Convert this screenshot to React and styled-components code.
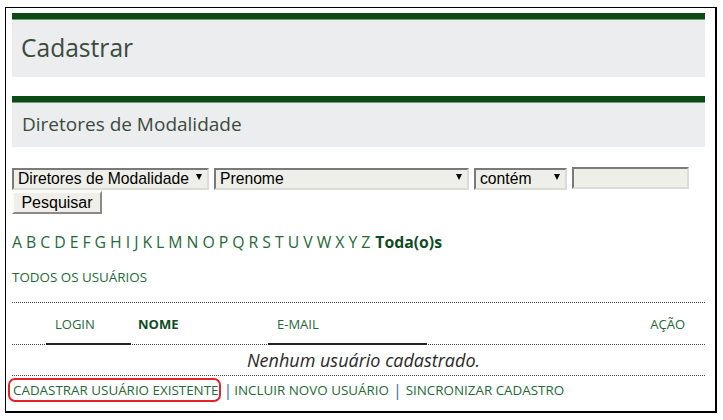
import React from "react";
import styled, { createGlobalStyle } from "styled-components";

const Global = createGlobalStyle`
  html, body { margin: 0; padding: 0; background: #fff; }
  body { font-family: "Open Sans", "Noto Sans", sans-serif; }
  * { box-sizing: border-box; }
`;

const Frame = styled.div`
  margin: 7px 6px 0 5px;
  width: 712px;
  height: 406px;
  border: 1px solid #000;
  border-right-width: 2px;
  border-bottom-width: 2px;
  padding: 5px 10px 0 6px;
`;

const Panel = styled.div`
  background: #ecedef;
  border-top: 6px solid #0b4a14;
  box-shadow: inset 0 1px 0 #6f9a74;
  height: ${(p) => p.$h}px;
  margin-bottom: ${(p) => p.$mb || 0}px;
  display: flex;
  align-items: center;
  padding-left: ${(p) => p.$pl}px;
`;

const Title = styled.h1`
  margin: 0;
  font-weight: 400;
  font-size: ${(p) => p.$size}px;
  color: #3b4b3d;
  line-height: 1;
`;

const FilterRow = styled.div`
  display: flex;
  gap: 5px;
  margin-top: 20px;
`;

const SelectWrap = styled.div`
  position: relative;
  width: ${(p) => p.$w}px;
  height: 22px;
`;

const Select = styled.select`
  appearance: none;
  width: 100%;
  height: 22px;
  background: #efefe9;
  border: 2px solid;
  border-color: #7a7a7a #dcdcd6 #dcdcd6 #7a7a7a;
  font-family: "Liberation Sans", Arial, sans-serif;
  font-size: 15.7px;
  color: #000;
  padding: 0 0 0 4px;
  border-radius: 0;
`;

const Arrow = styled.span`
  position: absolute;
  right: 7px;
  top: 7px;
  width: 0;
  height: 0;
  border-left: 3.5px solid transparent;
  border-right: 3.5px solid transparent;
  border-top: 6px solid #000;
  pointer-events: none;
`;

const TextInput = styled.input`
  width: 117px;
  height: 22px;
  background: #efefe9;
  border: 2px solid;
  border-color: #7a7a7a #dcdcd6 #dcdcd6 #7a7a7a;
  padding: 0;
`;

const Button = styled.button`
  display: block;
  margin-top: 2px;
  width: 90px;
  height: 23px;
  background: #efeee8;
  border: 2px solid;
  border-color: #fbfbf8 #8a8a86 #8a8a86 #fbfbf8;
  font-family: "Liberation Sans", Arial, sans-serif;
  font-size: 16px;
  color: #000;
  padding: 0;
  line-height: 18px;
`;

const Letters = styled.div`
  margin-top: 18px;
  display: flex;
  gap: 4px;
  font-size: 15.8px;
  line-height: 20px;
  color: #236a37;
`;

const Letter = styled.a`
  color: ${(p) => (p.$bold ? "#0f4c22" : "#236a37")};
  font-weight: ${(p) => (p.$bold ? 700 : 400)};
  text-decoration: none;
  margin-left: ${(p) => (p.$bold ? 1 : 0)}px;
`;

const AllUsers = styled.a`
  display: block;
  margin-top: 16px;
  font-size: 13.4px;
  line-height: 18px;
  color: #236a37;
  text-decoration: none;
`;

const Table = styled.div`
  margin-top: 16px;
  border-top: 1px dotted #444;
`;

const HeadRow = styled.div`
  display: grid;
  grid-template-columns: 34px 85px 137px 159px 1fr 80px;
  height: 42px;
  border-bottom: 1px dotted #444;
`;

const HeadCell = styled.div`
  display: flex;
  align-items: center;
  justify-content: ${(p) => (p.$right ? "flex-end" : "flex-start")};
  padding: 0 ${(p) => (p.$right ? 20 : 0)}px 0 ${(p) => p.$pl || 0}px;
  font-size: 13px;
  font-weight: ${(p) => (p.$bold ? 700 : 400)};
  color: ${(p) => (p.$bold ? "#0f4c22" : "#236a37")};
  box-shadow: ${(p) => (p.$active ? "inset 0 -2px 0 #222" : "none")};
  margin-bottom: ${(p) => (p.$active ? -1 : 0)}px;
`;

const EmptyRow = styled.div`
  height: 31px;
  display: flex;
  align-items: center;
  justify-content: center;
  font-style: italic;
  font-size: 18px;
  color: #2a2a2a;
  border-bottom: 1px dotted #444;
  padding-left: 10px;
`;

const Actions = styled.div`
  display: flex;
  align-items: center;
  margin-top: 2px;
  margin-left: -4px;
  font-size: 13.4px;
  color: #236a37;
`;

const Action = styled.a`
  color: #236a37;
  text-decoration: none;
  line-height: 20px;
  ${(p) =>
    p.$marked &&
    `
    border: 2px solid #e3222a;
    border-radius: 7px;
    padding: 0 1px 0 3px;
  `}
`;

const Sep = styled.span`
  color: #3a6ea5;
  margin: 0 ${(p) => (p.$first ? 2 : 4)}px 0 ${(p) => (p.$first ? 2 : 4)}px;
  font-size: 16px;
`;

const letters = "ABCDEFGHIJKLMNOPQRSTUVWXYZ".split("");

export default function App() {
  return (
    <>
      <Global />
      <Frame>
        <Panel $h={64} $mb={19} $pl={9}>
          <Title $size={24.6}>Cadastrar</Title>
        </Panel>
        <Panel $h={51} $pl={10}>
          <Title as="h2" $size={19}>Diretores de Modalidade</Title>
        </Panel>
        <FilterRow>
          <SelectWrap $w={197}>
            <Select defaultValue="d">
              <option value="d">Diretores de Modalidade</option>
            </Select>
            <Arrow />
          </SelectWrap>
          <SelectWrap $w={255}>
            <Select defaultValue="p">
              <option value="p">Prenome</option>
            </Select>
            <Arrow />
          </SelectWrap>
          <SelectWrap $w={93}>
            <Select defaultValue="c">
              <option value="c">contém</option>
            </Select>
            <Arrow />
          </SelectWrap>
          <TextInput type="text" />
        </FilterRow>
        <Button>Pesquisar</Button>
        <Letters>
          {letters.map((l) => (
            <Letter key={l}>{l}</Letter>
          ))}
          <Letter $bold>Toda(o)s</Letter>
        </Letters>
        <AllUsers>TODOS OS USUÁRIOS</AllUsers>
        <Table>
          <HeadRow>
            <HeadCell />
            <HeadCell $pl={9} $active>LOGIN</HeadCell>
            <HeadCell $pl={7} $bold>NOME</HeadCell>
            <HeadCell $pl={9} $active>E-MAIL</HeadCell>
            <HeadCell />
            <HeadCell $right>AÇÃO</HeadCell>
          </HeadRow>
          <EmptyRow>Nenhum usuário cadastrado.</EmptyRow>
        </Table>
        <Actions>
          <Action $marked>CADASTRAR USUÁRIO EXISTENTE</Action>
          <Sep $first>|</Sep>
          <Action>INCLUIR NOVO USUÁRIO</Action>
          <Sep>|</Sep>
          <Action>SINCRONIZAR CADASTRO</Action>
        </Actions>
      </Frame>
    </>
  );
}
